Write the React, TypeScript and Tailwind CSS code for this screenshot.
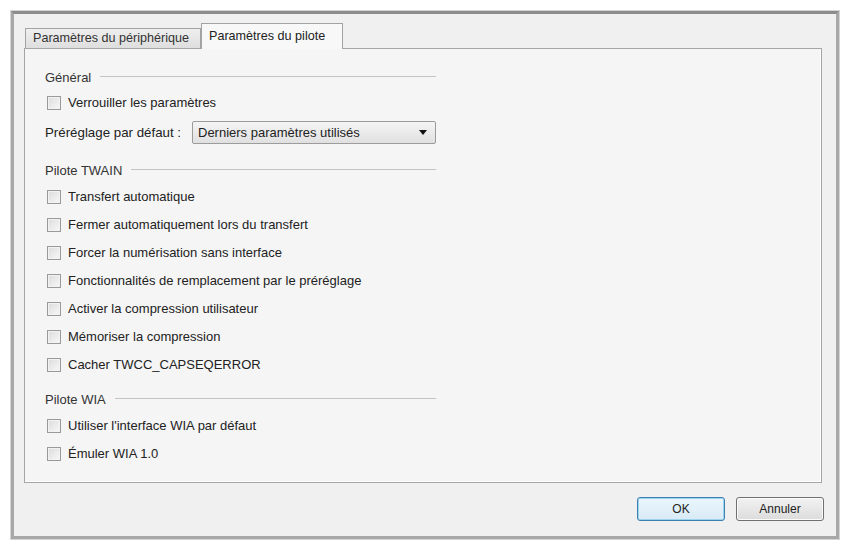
import React from "react";

const font = { fontFamily: '"Liberation Sans", Arial, sans-serif' };

function Header({ label, top }: { label: string; top: string }) {
  return (
    <div className={`flex items-center h-[20px] w-[391px] ${top}`}>
      <span className="text-[13px] text-[#333] whitespace-nowrap">{label}</span>
      <div className="flex-1 h-px bg-[#c4c4c4] ml-[9px] -translate-y-[2px]" />
    </div>
  );
}

function Check({ label, top }: { label: string; top: string }) {
  return (
    <label className={`flex items-center h-[20px] ${top}`}>
      <span className="w-[14px] h-[14px] ml-[2px] border border-[#9a9a9a] bg-gradient-to-br from-[#dcdcdc] to-[#f8f8f8] shadow-[inset_0_0_0_1px_#f2f2f2]" />
      <span className="ml-[7px] text-[13px] text-[#222] whitespace-nowrap">{label}</span>
    </label>
  );
}

const twain = [
  "Transfert automatique",
  "Fermer automatiquement lors du transfert",
  "Forcer la numérisation sans interface",
  "Fonctionnalités de remplacement par le préréglage",
  "Activer la compression utilisateur",
  "Mémoriser la compression",
  "Cacher TWCC_CAPSEQERROR",
];

export default function App() {
  return (
    <div className="w-[843px] h-[540px] bg-white pt-[11px] pl-[11px]" style={font}>
      <div className="w-[828px] h-[528px] border-[3px] border-[#a8a8a8] border-t-[#8c8c8c] bg-[#f0f0f0] shadow-[0_0_0_1px_#d4d4d4] flex flex-col pt-[9px] pl-[10px] pr-[14px]">
        {/* tabs */}
        <div className="flex items-end h-[25px]">
          <div className="ml-px h-[20px] px-[7px] flex items-center border border-b-0 border-[#a3a3a3] bg-gradient-to-b from-[#efefef] to-[#dedede] text-[12.6px] text-[#333] whitespace-nowrap w-[176px]">
            Paramètres du périphérique
          </div>
          <div className="h-[26px] -mb-px z-10 px-[7px] flex items-center border border-b-0 border-[#a3a3a3] bg-[#f8f8f8] text-[12.6px] text-[#222] whitespace-nowrap w-[142px]">
            Paramètres du pilote
          </div>
        </div>

        {/* panel */}
        <div className="h-[435px] border border-[#a5a5a5] bg-[#f5f5f5] shadow-[inset_-1px_-1px_0_#ffffff] pl-[20px] flex flex-col">
          <Header label="Général" top="mt-[19px]" />
          <Check label="Verrouiller les paramètres" top="mt-[5px]" />
          <div className="flex items-center h-[23px] mt-[8px] w-[391px]">
            <span className="text-[13.3px] text-[#222] whitespace-nowrap">Préréglage par défaut :</span>
            <div className="ml-auto w-[244px] h-[23px] rounded-[2px] border border-[#9c9c9c] bg-gradient-to-b from-[#f5f5f5] to-[#e0e0e0] flex items-center pl-[5px] pr-[8px]">
              <span className="text-[13px] text-[#222] whitespace-nowrap flex-1">Derniers paramètres utilisés</span>
              <svg width="8" height="5" viewBox="0 0 8 5">
                <path d="M0 0h8L4 5z" fill="#111" />
              </svg>
            </div>
          </div>
          <Header label="Pilote TWAIN" top="mt-[17px]" />
          {twain.map((t, i) => (
            <Check key={t} label={t} top={i === 0 ? "mt-[6px]" : "mt-[8px]"} />
          ))}
          <Header label="Pilote WIA" top="mt-[15px]" />
          <Check label="Utiliser l'interface WIA par défaut" top="mt-[6px]" />
          <Check label="Émuler WIA 1.0" top="mt-[8px]" />
        </div>

        {/* buttons */}
        <div className="flex justify-end gap-[11px] mt-[14px] -mr-[2px]">
          <button className="w-[88px] h-[24px] rounded-[3px] border border-[#3c7fb1] bg-gradient-to-b from-[#eaf6fd] to-[#d9ebf5] shadow-[inset_0_0_0_1px_#9fd4ef] text-[12px] text-[#222]">
            OK
          </button>
          <button className="w-[88px] h-[24px] rounded-[3px] border border-[#707070] bg-gradient-to-b from-[#f2f2f2] to-[#dcdcdc] shadow-[inset_0_0_0_1px_#fbfbfb] text-[12px] text-[#222]">
            Annuler
          </button>
        </div>
      </div>
    </div>
  );
}
